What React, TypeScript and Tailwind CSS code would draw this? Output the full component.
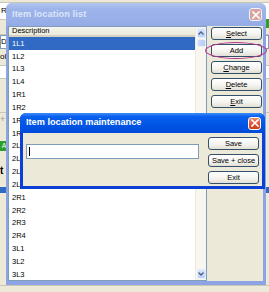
import React from 'react'

const ROWS = ['1L1', '1L2', '1L3', '1L4', '1R1', '1R2', '1R3', '1R4', '2L1', '2L2', '2L3', '2L4', '2R1', '2R2', '2R3', '2R4', '3L1', '3L2', '3L3']

function XpButton({ children }: { children: React.ReactNode }) {
  return (
    <button className="h-[13px] w-[51px] rounded-[3px] border border-[#34516C] bg-[linear-gradient(180deg,#FFFFFF_0%,#F5F4F0_55%,#E2DFD5_100%)] text-[7.5px] leading-none text-black flex items-center justify-center">
      {children}
    </button>
  )
}

function CloseBox({ active }: { active: boolean }) {
  return (
    <div
      className={`w-[13px] h-[13px] rounded-[3px] border flex items-center justify-center ${
        active ? 'bg-[linear-gradient(180deg,#EE8A6A_0%,#E0502C_60%,#C8401E_100%)] border-white' : 'bg-[#D8A39E] border-[#EEF2FB]'
      }`}
    >
      <svg width="8" height="8" viewBox="0 0 8 8">
        <path d="M1 1 L7 7 M7 1 L1 7" stroke="white" strokeWidth="1.6" strokeLinecap="square" />
      </svg>
    </div>
  )
}

function ScrollArrow({ up }: { up: boolean }) {
  return (
    <div className="h-[10px] w-[9px] rounded-[2px] bg-[linear-gradient(180deg,#D9E5FD_0%,#BCD0F8_100%)] border border-[#E6EEFD] flex items-center justify-center">
      <svg width="6" height="4" viewBox="0 0 6 4">
        <path d={up ? 'M0.5 3.5 L3 1 L5.5 3.5' : 'M0.5 0.5 L3 3 L5.5 0.5'} stroke="#4D6185" strokeWidth="1.3" fill="none" />
      </svg>
    </div>
  )
}

export default function App() {
  return (
    <div className="relative w-[269px] h-[292px] overflow-hidden bg-[#ECE9D8] font-['Liberation_Sans',Arial,sans-serif] text-[7.5px] text-black">
      {/* app window behind the dialogs */}
      <div className="absolute inset-0 flex flex-col">
        <div className="h-[3px] border-b border-[#C9C6B6]" />
        <div className="h-[16px] bg-white flex items-center pl-[1px] text-[8px]">Re</div>
        <div className="h-[16px] border-y border-[#C9C6B6]" />
        <div className="h-[14px] bg-white border border-[#7F9DB9] flex items-center text-[8px]">D</div>
        <div className="h-[16px] flex items-center text-[8px]">ol</div>
        <div className="h-[14px] border-y border-[#C9C6B6] bg-white" />
        <div className="h-[20px]" />
        <div className="h-[14px] border-b border-[#C9C6B6]" />
        <div className="h-[14px] flex items-center text-[#9A9A9A] text-[9px]">+</div>
        <div className="h-[14px]" />
        <div className="h-[10px] w-[8px] bg-[#2E9E2E] text-white text-[7px] flex items-center justify-center">A</div>
        <div className="h-[12px]" />
        <div className="h-[14px] flex items-center font-bold text-[10px]">t</div>
        <div className="h-[10px]" />
        <div className="h-[6px] bg-[#316AC5]" />
        <div className="flex-1" />
        <div className="h-[7px] border-t border-[#C9C6B6]" />
      </div>
      <div className="absolute right-0 top-[19px] w-[4px] h-[9px] bg-[#2E9E2E]" />

      {/* Item location list (inactive) */}
      <div className="absolute left-[6px] top-[3px] w-[260px] h-[282px] rounded-t-[6px] bg-[#8CA4E3] flex flex-col pl-[2px] pr-[3px] pb-[4px]">
        <div className="h-[23px] -mx-[2px] -mr-[3px] rounded-t-[6px] bg-[linear-gradient(180deg,#B3C6F0_0%,#9EB5EB_25%,#94ABE6_100%)] flex items-center pl-[6px] pr-[4px]">
          <span className="font-bold text-[9.2px] text-[#DCE5F8] tracking-[0.1px]">Item location list</span>
          <div className="ml-auto">
            <CloseBox active={false} />
          </div>
        </div>
        <div className="flex-1 flex bg-[#ECE9D8]">
          <div className="w-[199px] h-[255px] border border-[#7F9DB9] bg-white flex overflow-hidden">
            <div className="flex-1 flex flex-col">
              <div className="h-[10px] bg-[linear-gradient(180deg,#F6F5EE_0%,#EBEADB_100%)] border-b-2 border-[#D6D2C2] flex items-center pl-[3px]">Description</div>
              {ROWS.map((r, i) => (
                <div key={r} className={`h-[12.83px] shrink-0 flex items-center pl-[3px] ${i === 0 ? 'bg-[#316AC5] text-white' : ''}`}>
                  {r}
                </div>
              ))}
            </div>
            <div className="w-[11px] bg-[#F7F6EF] border-l border-[#EDEBE0] flex flex-col items-center py-[1px]">
              <ScrollArrow up />
              <div className="mt-[1px] h-[8px] w-[9px] rounded-[2px] bg-[linear-gradient(90deg,#CCDBFC_0%,#B8CCF7_100%)] border border-[#E6EEFD]" />
              <div className="flex-1" />
              <ScrollArrow up={false} />
            </div>
          </div>
          <div className="flex flex-col gap-[4px] pl-[4px] pt-[1px]">
            <XpButton><span><u>S</u>elect</span></XpButton>
            <XpButton>Add</XpButton>
            <XpButton><span><u>C</u>hange</span></XpButton>
            <XpButton><span><u>D</u>elete</span></XpButton>
            <XpButton><span><u>E</u>xit</span></XpButton>
          </div>
        </div>
      </div>

      {/* annotation ring around Add */}
      <div className="absolute left-[205px] top-[42px] w-[62px] h-[17px] rounded-[50%] border border-[#B8358F]" />

      {/* Item location maintenance (active) */}
      <div className="absolute left-[20px] top-[113px] w-[245px] h-[76px] rounded-t-[6px] bg-[#0B3FD6] flex flex-col px-[3px] pb-[3px]">
        <div className="h-[20px] -mx-[3px] rounded-t-[6px] bg-[linear-gradient(180deg,#3D8DF8_0%,#0A60EE_18%,#0055E5_60%,#024AD8_100%)] flex items-center pl-[6px] pr-[4px]">
          <span className="font-bold text-[9.2px] text-white">Item location maintenance</span>
          <div className="ml-auto">
            <CloseBox active />
          </div>
        </div>
        <div className="flex-1 bg-[#ECE9D8] flex">
          <div className="flex-1 pl-[3px] pt-[11px]">
            <div className="w-[173px] h-[15px] bg-white border border-[#7F9DB9] flex items-center pl-[2px]">
              <div className="w-px h-[9px] bg-black" />
            </div>
          </div>
          <div className="flex flex-col gap-[4px] pt-[4px] pr-[3px]">
            <XpButton>Save</XpButton>
            <XpButton>Save + close</XpButton>
            <XpButton>Exit</XpButton>
          </div>
        </div>
      </div>
    </div>
  )
}
